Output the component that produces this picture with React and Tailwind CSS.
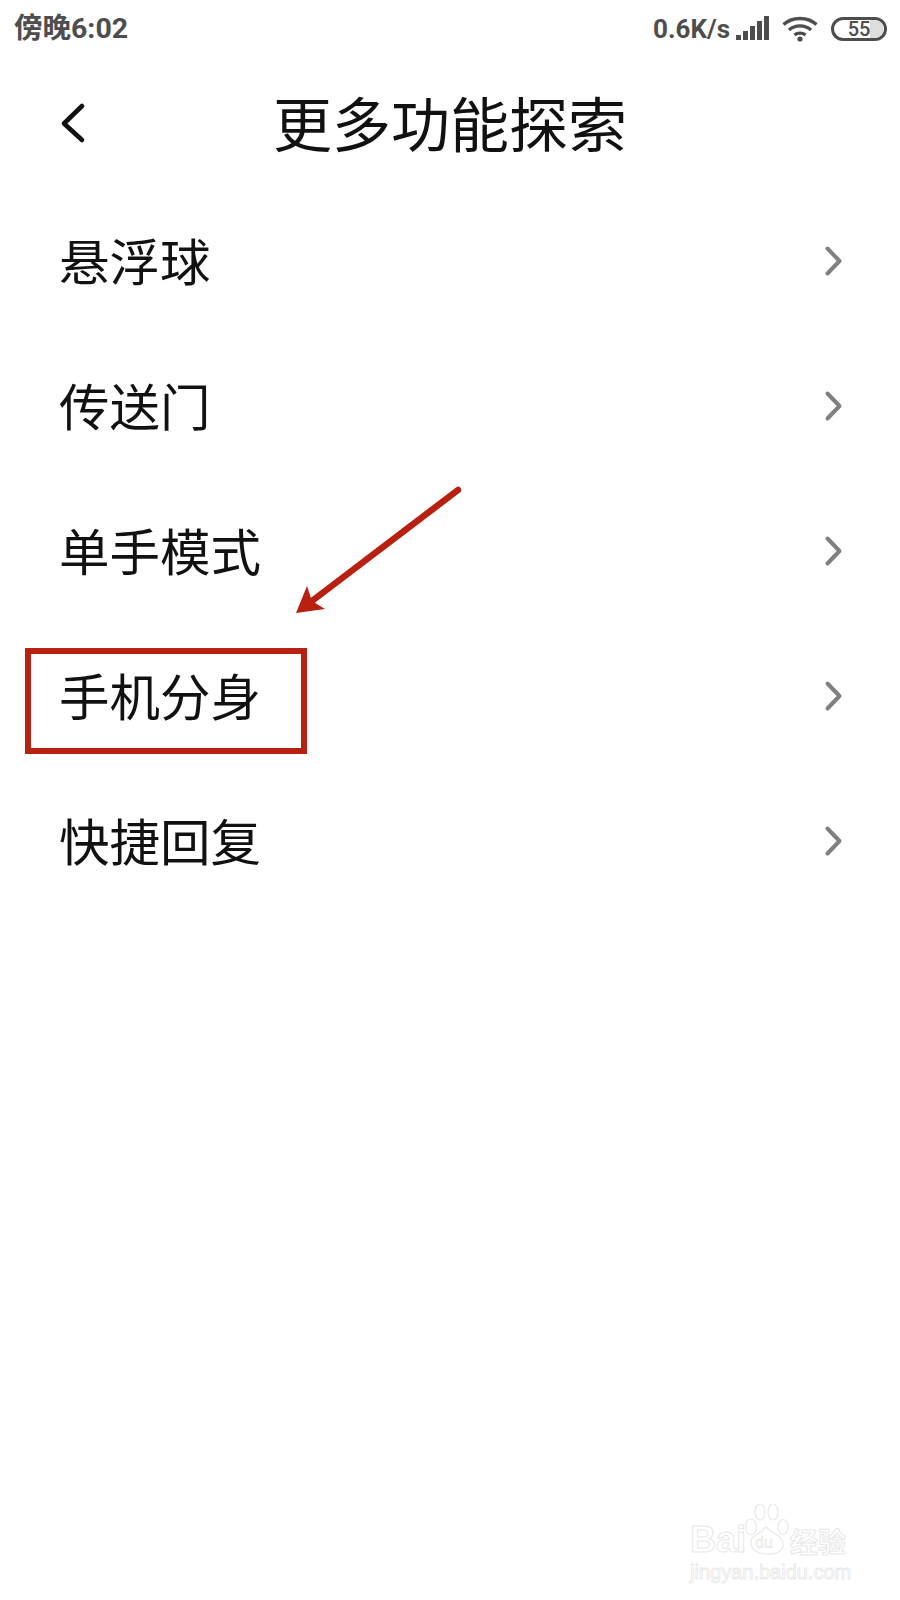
import React from "react";

const font = "font-['Noto_Sans_CJK_SC','Noto_Sans',sans-serif]";
const statusFont = "font-['Roboto','Noto_Sans_CJK_SC',sans-serif]";

function Chevron() {
  return (
    <svg width="20" height="32" viewBox="0 0 20 32" fill="none" className="shrink-0">
      <path d="M3.5 3.5 L15.5 16 L3.5 28.5" stroke="#808080" strokeWidth="4" strokeLinecap="round" strokeLinejoin="round" />
    </svg>
  );
}

function Row({ label }) {
  return (
    <div className="h-[145px] flex items-center justify-between pl-[59px] pr-[56px]">
      <span className="text-[50.5px] leading-none text-[#111111] pb-[3px]">{label}</span>
      <Chevron />
    </div>
  );
}

function Signal() {
  return (
    <svg width="34" height="25" viewBox="0 0 34 25" fill="#4d4d4d">
      <rect x="0" y="19" width="5" height="5" />
      <rect x="7" y="15" width="5" height="9" />
      <rect x="14" y="10" width="5" height="14" />
      <rect x="21" y="5" width="5" height="19" />
      <rect x="28" y="0" width="5" height="24" />
    </svg>
  );
}

function Wifi() {
  return (
    <svg width="36" height="26" viewBox="0 0 36 26" fill="none" stroke="#4d4d4d" strokeWidth="3.4">
      <path d="M1.5 8.5 C10.5 0.5 25.5 0.5 34.5 8.5" />
      <path d="M7 14 C13 8.5 23 8.5 29 14" />
      <path d="M12.5 19 C15.5 16.5 20.5 16.5 23.5 19" />
      <circle cx="18" cy="23" r="2.6" fill="#4d4d4d" stroke="none" />
    </svg>
  );
}

function Battery() {
  return (
    <div className="relative w-[56px] h-[24px] rounded-full border-[3px] border-[#4d4d4d] overflow-hidden flex items-center justify-center">
      <div className="absolute right-0 top-0 bottom-0 w-[14px] bg-[#dddddd]" />
      <span className="relative text-[20px] font-medium leading-none text-[#4d4d4d]">55</span>
    </div>
  );
}

function Watermark() {
  return (
    <div className="absolute left-[690px] top-[1503px] w-[170px] font-['Liberation_Sans',sans-serif] text-white">
      <div className="flex items-end h-[52px]">
        <span className="text-[36px] leading-none font-bold mb-[-3px] [-webkit-text-stroke:1px_#e8e8e8]">Bai</span>
        <svg width="46" height="52" viewBox="0 0 46 52" fill="none" stroke="#e8e8e8" strokeWidth="1.2" className="-ml-[2px] shrink-0">
          <ellipse cx="7" cy="24" rx="5.5" ry="8" />
          <ellipse cx="16" cy="9" rx="5" ry="8" />
          <ellipse cx="29" cy="9" rx="5" ry="8" />
          <ellipse cx="39" cy="24" rx="5" ry="7.5" />
          <path d="M8 44 C3 33 15 32 22 24 C29 31 43 34 38 46 C33 53 13 53 8 44 Z" />
          <text x="11" y="45" fontSize="16" fill="white" stroke="#e8e8e8" strokeWidth="0.7" fontFamily="Liberation Sans">du</text>
        </svg>
        <span className="text-[28px] leading-none font-['Noto_Sans_CJK_SC',sans-serif] font-bold [-webkit-text-stroke:1px_#e8e8e8] whitespace-nowrap">经验</span>
      </div>
      <div className="text-[20px] leading-none mt-[7px] whitespace-nowrap [-webkit-text-stroke:0.8px_#e8e8e8]">jingyan.baidu.com</div>
    </div>
  );
}

export default function App() {
  return (
    <div className={`relative w-[900px] h-[1600px] bg-white overflow-hidden ${font}`}>
      <div className={`h-[58px] flex items-center justify-between pl-[14px] pr-[13px] text-[#4d4d4d] ${statusFont}`}>
        <span className="text-[28.5px] font-bold leading-none">傍晚6:02</span>
        <div className="flex items-center">
          <span className="text-[26px] font-bold leading-none">0.6K/s</span>
          <div className="ml-[6px] mb-[2px]"><Signal /></div>
          <div className="ml-[12px]"><Wifi /></div>
          <div className="ml-[13px]"><Battery /></div>
        </div>
      </div>

      <div className="relative h-[130px] flex items-center justify-center">
        <svg width="28" height="42" viewBox="0 0 28 42" fill="none" className="absolute left-[60px] top-[44px]">
          <path d="M22 4 L4 21.5 L22 38" stroke="#111111" strokeWidth="4.6" strokeLinecap="round" strokeLinejoin="round" />
        </svg>
        <h1 className="text-[59px] font-normal leading-none text-[#111111] pb-[4px]">更多功能探索</h1>
      </div>

      <div>
        {["悬浮球", "传送门", "单手模式", "手机分身", "快捷回复"].map((l) => (
          <Row key={l} label={l} />
        ))}
      </div>

      <div className="absolute left-[25px] top-[648px] w-[282px] h-[106px] border-[6px] border-[#b8200f]" />
      <svg width="900" height="1600" className="absolute left-0 top-0 pointer-events-none">
        <path d="M458 490 L308 604" stroke="#b8200f" strokeWidth="6.5" strokeLinecap="round" />
        <path d="M296 613 L307 586 L312 601 L325 609 Z" fill="#b8200f" />
      </svg>
      <Watermark />
    </div>
  );
}
